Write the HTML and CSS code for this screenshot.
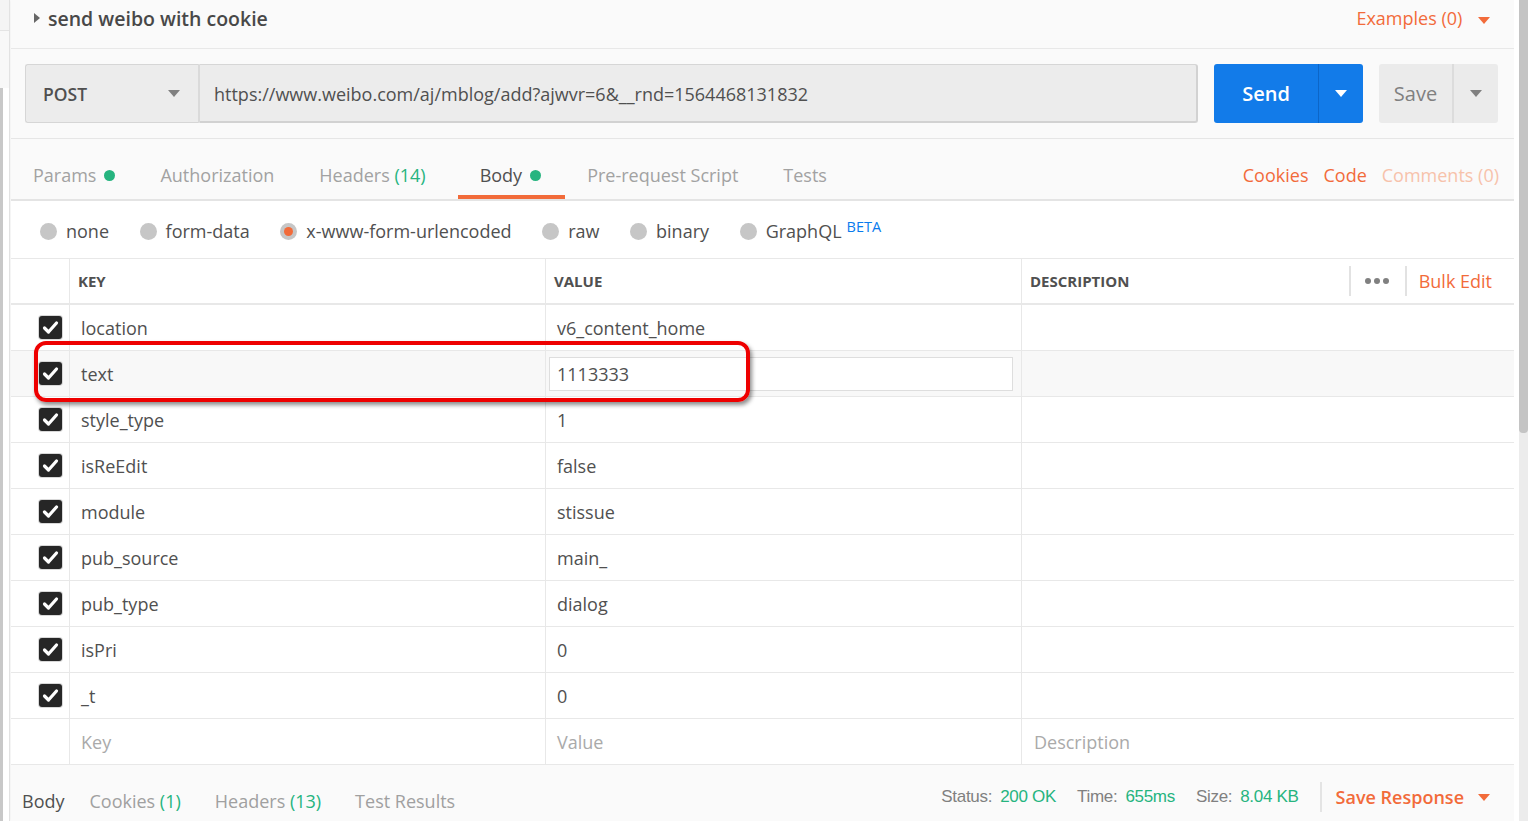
FILE: index.html
```html
<!DOCTYPE html>
<html lang="en">
<head>
    <meta charset="UTF-8">
    <title>send weibo with cookie</title>
    <link rel="stylesheet" href="styles.css">
</head>
<body>
    <div class="app">
        <div class="sidebar">
            <div class="sidebar-top"></div>
            <div class="sidebar-mid"></div>
            <div class="sidebar-list"></div>
        </div>

        <div class="main">
            <div class="title-row">
                <div class="title">
                    <span class="title-caret"></span>
                    send weibo with cookie
                </div>
                <div class="examples">Examples (0) <span class="caret orange"></span></div>
            </div>

            <div class="url-row">
                <div class="method">
                    <span>POST</span>
                    <span class="caret gray"></span>
                </div>
                <div class="url">https://www.weibo.com/aj/mblog/add?ajwvr=6&amp;__rnd=1564468131832</div>
                <div class="btn send">
                    <span class="btn-label">Send</span>
                    <span class="btn-drop"><span class="caret white"></span></span>
                </div>
                <div class="btn save">
                    <span class="btn-label">Save</span>
                    <span class="btn-drop"><span class="caret gray"></span></span>
                </div>
            </div>

            <div class="tabs">
                <div class="tab">Params<span class="dot"></span></div>
                <div class="tab">Authorization</div>
                <div class="tab wide">Headers <span class="count">(14)</span></div>
                <div class="tab active">Body<span class="dot"></span></div>
                <div class="tab">Pre-request Script</div>
                <div class="tab">Tests</div>
                <div class="tab-links">
                    <span class="link">Cookies</span>
                    <span class="link">Code</span>
                    <span class="link faded">Comments (0)</span>
                </div>
            </div>

            <div class="body-types">
                <label class="radio"><span class="radio-dot"></span>none</label>
                <label class="radio"><span class="radio-dot"></span>form-data</label>
                <label class="radio"><span class="radio-dot checked"></span>x-www-form-urlencoded</label>
                <label class="radio"><span class="radio-dot"></span>raw</label>
                <label class="radio"><span class="radio-dot"></span>binary</label>
                <label class="radio"><span class="radio-dot"></span>GraphQL<sup class="beta">BETA</sup></label>
            </div>

            <div class="kv">
                <div class="kv-row kv-head">
                    <div class="cell check"></div>
                    <div class="cell">KEY</div>
                    <div class="cell">VALUE</div>
                    <div class="cell desc-head">
                        <span>DESCRIPTION</span>
                        <div class="head-actions">
                            <span class="more"><i></i><i></i><i></i></span>
                            <span class="link">Bulk Edit</span>
                        </div>
                    </div>
                </div>

                <div class="kv-row">
                    <div class="cell check"><span class="box"></span></div>
                    <div class="cell">location</div>
                    <div class="cell">v6_content_home</div>
                    <div class="cell"></div>
                </div>
                <div class="kv-row hover">
                    <div class="cell check"><span class="box"></span></div>
                    <div class="cell">text</div>
                    <div class="cell"><div class="edit">1113333</div></div>
                    <div class="cell"></div>
                </div>
                <div class="kv-row">
                    <div class="cell check"><span class="box"></span></div>
                    <div class="cell">style_type</div>
                    <div class="cell">1</div>
                    <div class="cell"></div>
                </div>
                <div class="kv-row">
                    <div class="cell check"><span class="box"></span></div>
                    <div class="cell">isReEdit</div>
                    <div class="cell">false</div>
                    <div class="cell"></div>
                </div>
                <div class="kv-row">
                    <div class="cell check"><span class="box"></span></div>
                    <div class="cell">module</div>
                    <div class="cell">stissue</div>
                    <div class="cell"></div>
                </div>
                <div class="kv-row">
                    <div class="cell check"><span class="box"></span></div>
                    <div class="cell">pub_source</div>
                    <div class="cell">main_</div>
                    <div class="cell"></div>
                </div>
                <div class="kv-row">
                    <div class="cell check"><span class="box"></span></div>
                    <div class="cell">pub_type</div>
                    <div class="cell">dialog</div>
                    <div class="cell"></div>
                </div>
                <div class="kv-row">
                    <div class="cell check"><span class="box"></span></div>
                    <div class="cell">isPri</div>
                    <div class="cell">0</div>
                    <div class="cell"></div>
                </div>
                <div class="kv-row">
                    <div class="cell check"><span class="box"></span></div>
                    <div class="cell">_t</div>
                    <div class="cell">0</div>
                    <div class="cell"></div>
                </div>
                <div class="kv-row placeholder">
                    <div class="cell check"></div>
                    <div class="cell">Key</div>
                    <div class="cell">Value</div>
                    <div class="cell">Description</div>
                </div>

                <!-- red annotation drawn over the screenshot -->
                <div class="mark"></div>
            </div>

            <div class="response-bar">
                <div class="res-tabs">
                    <span class="res-tab active">Body</span>
                    <span class="res-tab">Cookies <span class="count">(1)</span></span>
                    <span class="res-tab">Headers <span class="count">(13)</span></span>
                    <span class="res-tab">Test Results</span>
                </div>
                <div class="res-meta">
                    <span class="stat">Status:<b>200 OK</b></span>
                    <span class="stat">Time:<b>655ms</b></span>
                    <span class="stat">Size:<b>8.04 KB</b></span>
                    <span class="save-res">Save Response <span class="caret orange"></span></span>
                </div>
            </div>
        </div>

        <div class="scrollbar"><div class="thumb"></div></div>
    </div>
</body>
</html>
```

FILE: styles.css
```css
html, body {
    margin: 0;
    height: 100%;
    overflow: hidden;
}
body {
    font-family: "Open Sans", "Liberation Sans", sans-serif;
    color: #505050;
    background: #fff;
}
.app {
    display: flex;
    height: 821px;
}

/* left sidebar edge */
.sidebar {
    width: 9px;
    display: flex;
    flex-direction: column;
    border-right: 1px solid #e2e2e2;
    box-shadow: 1px 0 2px rgba(0, 0, 0, 0.06);
}
.sidebar-top {
    height: 30px;
    background: #f4f4f4;
    border-bottom: 1px solid #e4e4e4;
}
.sidebar-mid {
    height: 57px;
    background: #f8f8f8;
}
.sidebar-list {
    flex: 1;
    background: #fff;
    border-left: 3px solid #c8c8c8;
}

.main {
    width: 1503px;
    margin-left: 1px;
    display: flex;
    flex-direction: column;
    background: #fafafa;
}

/* title */
.title-row {
    height: 49px;
    border-bottom: 1px solid #e8e8e8;
    display: flex;
    align-items: center;
    justify-content: space-between;
    padding: 0 24px 0 23px;
    box-sizing: border-box;
}
.title {
    font-size: 19.5px;
    font-weight: 600;
    color: #484848;
    display: flex;
    align-items: center;
    margin-top: -12px;
}
.title-caret {
    width: 0;
    height: 0;
    border-top: 5px solid transparent;
    border-bottom: 5px solid transparent;
    border-left: 6px solid #666;
    margin-right: 8px;
}
.examples {
    font-size: 18px;
    color: #f26b3a;
    margin-top: -12px;
}
.examples .caret {
    margin-left: 11px;
}

.caret {
    display: inline-block;
    width: 0;
    height: 0;
    border-left: 6px solid transparent;
    border-right: 6px solid transparent;
    border-top: 7px solid #808080;
    vertical-align: middle;
}
.caret.orange { border-top-color: #f26b3a; }
.caret.white { border-top-color: #fff; }
.caret.gray { border-top-color: #808080; }

/* url row */
.url-row {
    display: flex;
    padding: 15px 16px 15px 14px;
    border-bottom: 1px solid #e6e6e6;
}
.method {
    width: 175px;
    height: 59px;
    box-sizing: border-box;
    background: #ececec;
    border: 1px solid #d6d6d6;
    border-right: 2px solid #dadada;
    border-radius: 3px 0 0 3px;
    display: flex;
    align-items: center;
    justify-content: space-between;
    padding: 0 18px 0 17px;
    font-size: 17.5px;
    font-weight: 600;
    color: #505050;
}
.url {
    width: 998px;
    height: 59px;
    box-sizing: border-box;
    background: #ececec;
    border: 1px solid #d6d6d6;
    border-left: none;
    border-bottom: 2px solid #d2d2d2;
    border-right: 2px solid #d2d2d2;
    border-radius: 0 3px 3px 0;
    display: flex;
    align-items: center;
    padding-left: 14px;
    padding-top: 2px;
    font-size: 18px;
    color: #505050;
}
.btn {
    display: flex;
    height: 59px;
    border-radius: 3px;
    margin-left: 16px;
}
.btn-label {
    display: flex;
    align-items: center;
    justify-content: center;
    font-size: 20px;
    font-weight: 600;
}
.btn-drop {
    display: flex;
    align-items: center;
    justify-content: center;
    width: 44px;
}
.send {
    background: #127be9;
    color: #fff;
}
.send .btn-label {
    width: 104px;
    border-right: 1px solid #0c66c8;
}
.save {
    background: #ebebeb;
    color: #808080;
}
.save .btn-label {
    width: 73px;
    border-right: 2px solid #dcdcdc;
    font-weight: 500;
}

/* request tabs */
.tabs {
    display: flex;
    height: 60px;
    border-bottom: 2px solid #e4e4e4;
}
.tab {
    padding: 24px 23px 0 22px;
    height: 60px;
    box-sizing: border-box;
    border-bottom: 4px solid transparent;
    font-size: 18px;
    color: #a2a2a2;
    white-space: nowrap;
    line-height: 24px;
}
.tab.wide {
    padding-right: 32px;
}
.tab.active {
    color: #505050;
    border-bottom-color: #f26b3a;
    padding-right: 24px;
}
.dot {
    display: inline-block;
    width: 11px;
    height: 11px;
    border-radius: 50%;
    background: #26b47f;
    margin-left: 8px;
    vertical-align: 1px;
}
.count {
    color: #26b47f;
}
.tab-links {
    margin-left: auto;
    padding: 24px 15px 0 0;
    font-size: 18px;
    line-height: 24px;
    display: flex;
    gap: 15px;
}
.link {
    color: #f26b3a;
}
.link.faded {
    color: #f7c2ab;
}

/* body type radios */
.body-types {
    display: flex;
    align-items: center;
    height: 58px;
    background: #fff;
    border-bottom: 1px solid #e8e8e8;
    padding: 3px 0 0 29px;
    gap: 30.6px;
    box-sizing: border-box;
}
.radio {
    display: flex;
    align-items: center;
    font-size: 18px;
    color: #505050;
    gap: 9px;
}
.radio-dot {
    width: 17px;
    height: 17px;
    border-radius: 50%;
    background: #c6c6c6;
    position: relative;
}
.radio-dot.checked::after {
    content: "";
    position: absolute;
    left: 4px;
    top: 4px;
    width: 9px;
    height: 9px;
    border-radius: 50%;
    background: #f26b3a;
}
.beta {
    font-size: 14.5px;
    color: #097bed;
    margin-left: -4px;
    position: relative;
    top: -5px;
}

/* key/value table */
.kv {
    position: relative;
    background: #fff;
}
.kv-row {
    display: grid;
    grid-template-columns: 59px 476px 476px 1fr;
    height: 46px;
    border-bottom: 1px solid #e8e8e8;
    box-sizing: border-box;
}
.kv-row.hover {
    background: #f8f8f8;
}
.kv-head {
    height: 46px;
    border-bottom: 2px solid #e8e8e8;
}
.cell {
    display: flex;
    align-items: center;
    border-right: 1px solid #e8e8e8;
    padding-left: 11px;
    font-size: 18px;
    color: #505050;
    white-space: nowrap;
}
.cell:last-child {
    border-right: none;
}
.kv-head .cell {
    font-size: 15px;
    font-weight: 700;
    padding-left: 8px;
}
.kv-head .desc-head {
    padding-left: 8px;
    justify-content: space-between;
}
.head-actions {
    display: flex;
    align-items: center;
    height: 100%;
}
.more {
    display: flex;
    gap: 3px;
    border-left: 2px solid #e2e2e2;
    border-right: 2px solid #e2e2e2;
    height: 30px;
    align-items: center;
    padding: 0 16px 0 14px;
}
.more i {
    width: 6px;
    height: 6px;
    border-radius: 50%;
    background: #808080;
}
.head-actions .link {
    font-size: 18px;
    font-weight: 400;
    padding: 0 22px 0 12px;
}
.cell.check {
    justify-content: flex-end;
    padding: 0 7px 0 0;
}
.box {
    width: 23px;
    height: 23px;
    border-radius: 3px;
    background: #262626 url("data:image/svg+xml;utf8,<svg xmlns='http://www.w3.org/2000/svg' viewBox='0 0 23 23'><path d='M5.5 12l4 4 8-9' fill='none' stroke='white' stroke-width='3.2' stroke-linecap='round' stroke-linejoin='round'/></svg>") center/23px 23px no-repeat;
    box-shadow: 0 0 0 1px #d8d8d8;
}
.edit {
    width: 100%;
    height: 34px;
    box-sizing: border-box;
    border: 1px solid #dedede;
    background: #fff;
    margin: 0 4px 0 -8px;
    display: flex;
    align-items: center;
    padding-left: 7px;
}
.placeholder .cell {
    color: #aaa;
}
.placeholder .cell:last-child {
    padding-left: 12px;
}
.mark {
    position: absolute;
    left: 23px;
    top: 82px;
    width: 716px;
    height: 61px;
    box-sizing: border-box;
    border: 4px solid #ee0000;
    border-radius: 12px;
    box-shadow: 2px 3px 4px rgba(0, 0, 0, 0.45);
}

/* response bar */
.response-bar {
    flex: 1;
    display: flex;
    justify-content: space-between;
    align-items: flex-end;
    padding-bottom: 8px;
}
.res-tabs {
    display: flex;
    gap: 25px;
    padding-left: 11px;
    font-size: 18px;
    line-height: 24px;
}
.res-tab {
    color: #a0a0a0;
    margin-right: 9px;
}
.res-tab.active {
    color: #505050;
    margin-right: 0;
}
.res-meta {
    display: flex;
    align-items: center;
    font-family: "Liberation Sans", Arial, sans-serif;
    font-size: 17px;
    color: #808080;
    padding-right: 24px;
    margin-bottom: 1px;
}
.stat {
    margin-right: 21px;
    letter-spacing: -0.3px;
}
.stat b {
    font-weight: 400;
    color: #26b47f;
    margin-left: 8px;
}
.save-res {
    font-family: "Open Sans", sans-serif;
    font-size: 18px;
    font-weight: 600;
    color: #f26b3a;
    border-left: 2px solid #e4e4e4;
    padding-left: 14px;
    height: 30px;
    display: flex;
    align-items: center;
}
.save-res .caret {
    margin-left: 14px;
}

/* right scrollbar */
.scrollbar {
    width: 14px;
    background: #ececec;
    border-left: 5px solid #fff;
    box-sizing: border-box;
}
.thumb {
    height: 433px;
    background: #c4c4c4;
    border-radius: 0 0 4px 4px;
}
```
